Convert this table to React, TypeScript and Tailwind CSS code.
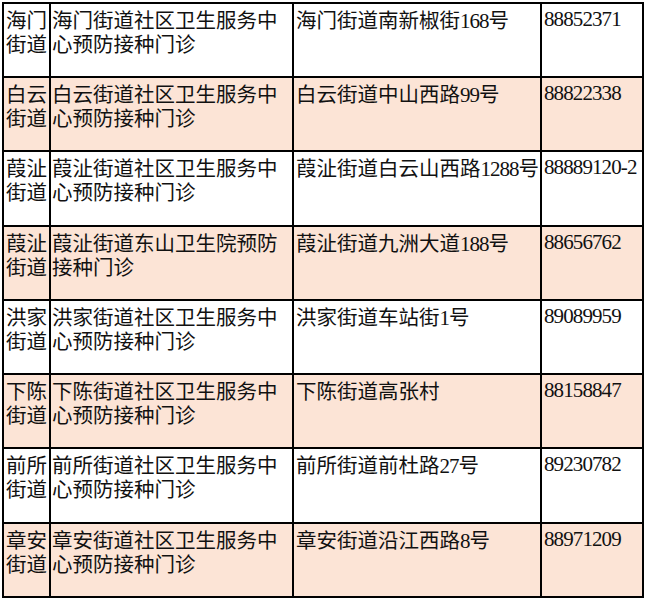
import React from "react";

type Row = { area: string; name: string; addr: string; phone: string; h: string; bg: string };

const rows: Row[] = [
  { area: "海门街道", name: "海门街道社区卫生服务中心预防接种门诊", addr: "海门街道南新椒街168号", phone: "88852371", h: "h-[72px]", bg: "bg-white" },
  { area: "白云街道", name: "白云街道社区卫生服务中心预防接种门诊", addr: "白云街道中山西路99号", phone: "88822338", h: "h-[72px]", bg: "bg-[#fce4d6]" },
  { area: "葭沚街道", name: "葭沚街道社区卫生服务中心预防接种门诊", addr: "葭沚街道白云山西路1288号", phone: "88889120-2", h: "h-[73px]", bg: "bg-white" },
  { area: "葭沚街道", name: "葭沚街道东山卫生院预防接种门诊", addr: "葭沚街道九洲大道188号", phone: "88656762", h: "h-[72px]", bg: "bg-[#fce4d6]" },
  { area: "洪家街道", name: "洪家街道社区卫生服务中心预防接种门诊", addr: "洪家街道车站街1号", phone: "89089959", h: "h-[72px]", bg: "bg-white" },
  { area: "下陈街道", name: "下陈街道社区卫生服务中心预防接种门诊", addr: "下陈街道高张村", phone: "88158847", h: "h-[72px]", bg: "bg-[#fce4d6]" },
  { area: "前所街道", name: "前所街道社区卫生服务中心预防接种门诊", addr: "前所街道前杜路27号", phone: "89230782", h: "h-[73px]", bg: "bg-white" },
  { area: "章安街道", name: "章安街道社区卫生服务中心预防接种门诊", addr: "章安街道沿江西路8号", phone: "88971209", h: "h-[72px]", bg: "bg-[#fce4d6]" },
];

function Mixed({ text }: { text: string }) {
  const parts = text.split(/(\d+)/);
  return (
    <>
      {parts.map((p, i) =>
        /^\d+$/.test(p) ? (
          <span key={i} className="tracking-[-1px] text-[21px]" style={{ fontFamily: '"Liberation Serif", serif' }}>
            {p}
          </span>
        ) : (
          <span key={i}>{p}</span>
        )
      )}
    </>
  );
}

export default function App() {
  return (
    <div className="w-[650px] h-[604px] bg-white pt-[2px] pl-[2px]">
      <div
        className="w-[642px] bg-black p-[2px] grid grid-cols-[45px_241px_246px_100px] gap-[2px] text-[20.5px] leading-[24px] text-[#111]"
        style={{ fontFamily: '"Noto Sans CJK SC", "Liberation Serif", sans-serif' }}
      >
        {rows.map((r, i) => (
          <React.Fragment key={i}>
            <div className={`${r.h} ${r.bg} pl-[2px] pt-[3px] break-all`}>{r.area}</div>
            <div className={`${r.h} ${r.bg} pl-[1px] pt-[3px] break-all`}>{r.name}</div>
            <div className={`${r.h} ${r.bg} pl-[2px] pt-[3px] whitespace-nowrap`}>
              <Mixed text={r.addr} />
            </div>
            <div
              className={`${r.h} ${r.bg} pl-[2px] pt-[3px] text-[21px] tracking-[-0.9px] whitespace-nowrap`}
              style={{ fontFamily: '"Liberation Serif", serif' }}
            >
              {r.phone}
            </div>
          </React.Fragment>
        ))}
      </div>
    </div>
  );
}
